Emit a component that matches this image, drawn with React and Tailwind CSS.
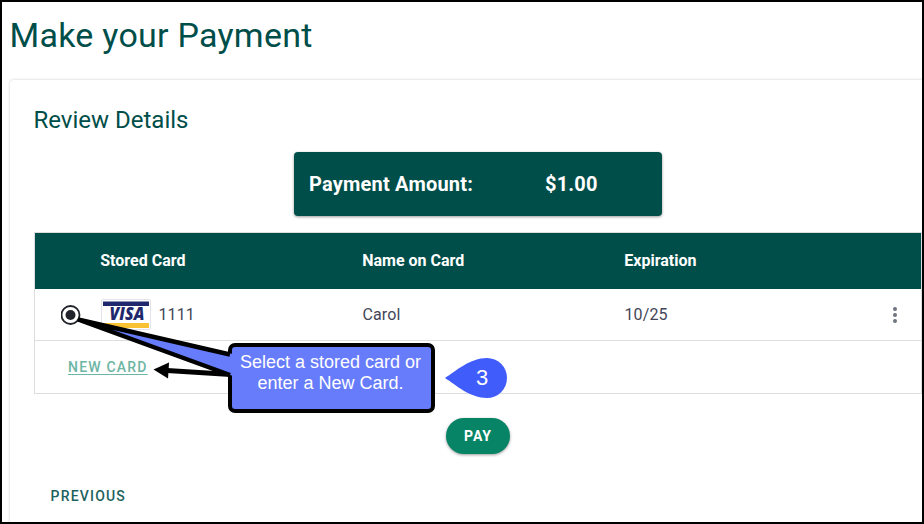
import React from 'react';

function VisaLogo() {
  return (
    <svg width="50" height="31" viewBox="0 0 50 31" className="shrink-0">
      <rect x="0.5" y="0.5" width="49" height="30" rx="1.5" fill="#fff" stroke="#e3e3ea" />
      <rect x="2" y="2.5" width="46" height="4.5" fill="#20286d" />
      <rect x="2" y="24" width="46" height="5" fill="#f9c235" />
      <text
        x="26"
        y="21"
        textAnchor="middle"
        textLength="35"
        lengthAdjust="spacingAndGlyphs"
        fontFamily="'Open Sans', sans-serif"
        fontSize="17"
        fontWeight="800"
        fontStyle="italic"
        fill="#20286d"
      >
        VISA
      </text>
    </svg>
  );
}

function Radio() {
  return (
    <svg width="20" height="20" viewBox="0 0 20 20">
      <circle cx="9.5" cy="10" r="9" fill="#fff" stroke="#20242a" strokeWidth="1.8" />
      <circle cx="9.5" cy="10" r="5" fill="#20242a" />
    </svg>
  );
}

function Annotations() {
  return (
    <div className="pointer-events-none absolute inset-0">
      <svg width="924" height="524" viewBox="0 0 924 524" className="absolute inset-0">
        <path d="M231 374.500L167 370.500" stroke="#000" strokeWidth="5" />
        <path d="M153.500 369.500L169 362.500L168 378.500Z" fill="#000" />
        <rect x="230" y="345" width="203" height="66" rx="5" fill="#677cfa" stroke="#000" strokeWidth="4" />
        <path d="M233 354L78 319L233 376Z" fill="#677cfa" />
        <path d="M230 354.500L78 319.500L230 375" fill="none" stroke="#000" strokeWidth="4.500" strokeLinejoin="bevel" />
        <path d="M445 378C456 371 470 358 487 358A20 20 0 0 1 487 398C470 398 456 385 445 378Z" fill="#405cfb" />
      </svg>
      <div className="absolute left-[230px] top-[352px] w-[201px] text-center font-['Liberation_Sans',sans-serif] text-[18px] leading-[21px] text-white">
        Select a stored card or
        <br />
        enter a New Card.
      </div>
      <div className="absolute left-[466px] top-[366px] w-8 text-center font-['Liberation_Sans',sans-serif] text-[22px] leading-6 text-white">
        3
      </div>
    </div>
  );
}

export default function App() {
  return (
    <div className="relative h-[524px] w-[924px] overflow-hidden border-2 border-black bg-white font-[Roboto,sans-serif]">
      <h1 className="h-[78px] pl-[7.5px] pt-[11px] text-[34px] leading-[44px] tracking-[0.25px] text-[#004e49]">Make your Payment</h1>

      <main className="ml-2 h-[460px] w-[940px] rounded pl-6 pt-6 shadow-[0_0_3px_rgba(0,0,0,0.2)]">
        <h2 className="-ml-[0.5px] h-12 text-[24px] leading-8 text-[#004e49]">Review Details</h2>

        <div className="ml-[260px] flex h-16 w-[368px] items-center rounded bg-[#004e49] pl-[15px] text-[20px] font-bold tracking-[0.2px] text-white shadow-[0_1px_3px_rgba(0,0,0,0.4)]">
          <span className="w-[236px]">Payment Amount:</span>
          <span>$1.00</span>
        </div>

        <section className="mt-4 w-[888px] border border-[#dedede]">
          <div className="flex h-14 items-center bg-[#004e49] pl-[65.25px] pb-px text-[16px] font-bold text-white">
            <span className="w-[262px]">Stored Card</span>
            <span className="w-[262px]">Name on Card</span>
            <span>Expiration</span>
          </div>
          <div className="flex h-[52px] items-center border-b border-[#dedede] text-[16px] tracking-[0.1px] text-[#434657]">
            <div className="w-[66px] pl-[26px]">
              <Radio />
            </div>
            <div className="flex w-[261.5px] items-center gap-[7.5px]">
              <VisaLogo />
              <span>1111</span>
            </div>
            <span className="w-[262px]">Carol</span>
            <span className="w-[268.5px]">10/25</span>
            <div className="flex flex-col gap-0.5 pt-px">
              <span className="size-1 rounded-full bg-[#707380]" />
              <span className="size-1 rounded-full bg-[#707380]" />
              <span className="size-1 rounded-full bg-[#707380]" />
            </div>
          </div>
          <div className="flex h-[52px] items-center pl-[33px] text-[14px] font-medium tracking-[1.2px] text-[#6db5a4]">
            <button className="underline underline-offset-2">NEW CARD</button>
          </div>
        </section>

        <button className="ml-[412px] mt-6 flex h-9 w-16 items-center justify-center rounded-full bg-[#078466] text-[14px] font-bold tracking-[0.9px] text-white shadow-[0_1px_3px_rgba(0,0,0,0.4)]">
          PAY
        </button>
        <button className="ml-[16.5px] mt-8 block text-[14px] font-medium leading-5 tracking-[1.2px] text-[#1d625e]">PREVIOUS</button>
      </main>

      <div className="absolute -left-0.5 -top-0.5 h-[524px] w-[924px]">
        <Annotations />
      </div>
    </div>
  );
}
